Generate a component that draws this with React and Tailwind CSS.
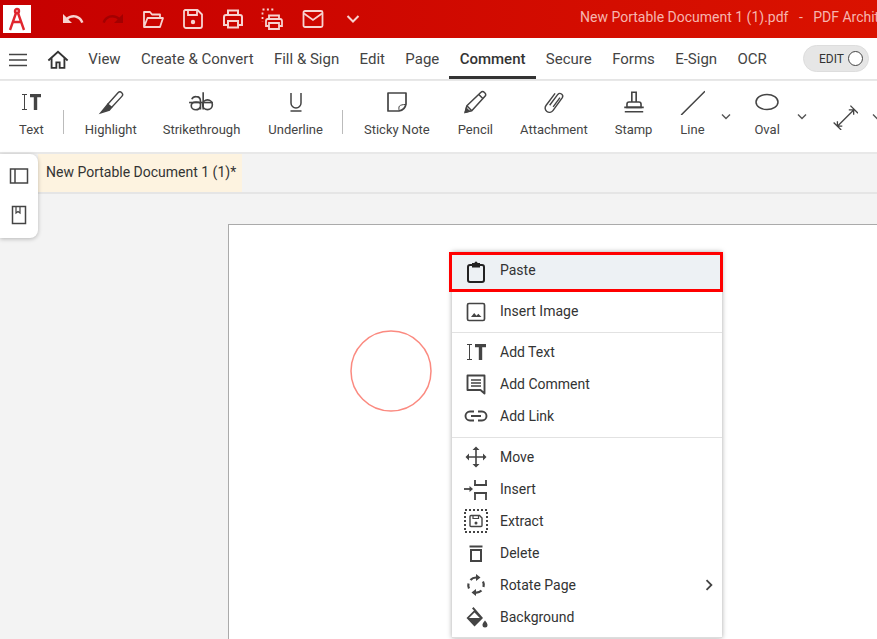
import React from 'react';
import { MdUndo, MdRedo, MdChevronRight } from 'react-icons/md';

const Ic = ({ size = 24, className = '', children, sw = 1.8 }) => (
  <svg width={size} height={size} viewBox="0 0 24 24" fill="none" stroke="currentColor" strokeWidth={sw} className={className}>
    {children}
  </svg>
);

const Chevron = ({ className = '' }) => (
  <svg width="12" height="8" viewBox="0 0 12 8" fill="none" stroke="currentColor" strokeWidth="1.4" className={className}>
    <path d="M2 1.5 6 5.5 10 1.5" />
  </svg>
);

const TextIcon = ({ size = 24 }) => (
  <Ic size={size} sw={1}>
    <path d="M3 4.5h5M3 19.5h5M5.5 4.5v15" />
    <path d="M11 4h11v3.2h-3.8V20h-3.4V7.2H11z" fill="currentColor" stroke="none" />
  </Ic>
);

const topIcons = [
  <MdUndo key="u" size={24} className="text-[#f7d3d0]" />,
  <MdRedo key="r" size={24} className="text-[#a30000]" />,
  <Ic key="o"><path d="M3 20V5h6l2 2.5h8V11M3 20h16l3-9H6.5z" strokeLinejoin="round" /></Ic>,
  <Ic key="s">
    <path d="M4 3h12.5L21 7.5V19a2 2 0 0 1-2 2H5a2 2 0 0 1-2-2V4z" strokeLinejoin="round" />
    <path d="M7 3.5V8h9V3.5" />
    <circle cx="12" cy="15" r="2.2" fill="currentColor" stroke="none" />
  </Ic>,
  <Ic key="p" sw={2}>
    <path d="M7 8V3.5h10V8M7 18H3v-8a2 2 0 0 1 2-2h14a2 2 0 0 1 2 2v8h-4" />
    <path d="M7 14h10v6.5H7z" />
  </Ic>,
  <Ic key="d">
    <path d="M1.5 2.5h12" strokeDasharray="2 2.4" />
    <path d="M1.5 5.5v9" strokeDasharray="2 2.4" />
    <path d="M8 12V8.5h10V12M8 19H5v-5a2 2 0 0 1 2-2h12a2 2 0 0 1 2 2v5h-3" />
    <path d="M8 16h10v6H8z" />
  </Ic>,
  <Ic key="m"><rect x="2.5" y="4" width="19" height="16" rx="1.5" /><path d="M3 6.5 12 13l9-6.5" /></Ic>,
  <svg key="c" width="24" height="24" viewBox="0 0 24 24" fill="none" stroke="currentColor" strokeWidth="2"><path d="M6.5 9 12 14.5 17.5 9" /></svg>,
];

const tabs = ['View', 'Create & Convert', 'Fill & Sign', 'Edit', 'Page', 'Comment', 'Secure', 'Forms', 'E-Sign', 'OCR'];

const Tool = ({ label, icon, className = '' }) => (
  <div className={`flex flex-col items-center px-[14px] shrink-0 ${className}`}>
    <div className="h-[28px] flex items-center justify-center">{icon}</div>
    <span className="mt-[6px] text-[13px] leading-[16px] text-[#444] whitespace-nowrap">{label}</span>
  </div>
);

const Sep = () => <div className="w-px h-[24px] bg-[#bbb] ml-[5px] mr-[7px] mt-[4px] self-center shrink-0" />;

const ToolChevron = ({ className = '' }) => (
  <div className={`w-[18px] flex justify-center pt-[25px] shrink-0 text-[#555] ${className}`}>
    <Chevron />
  </div>
);

const MenuRow = ({ icon, label, arrow }) => (
  <div className="h-8 flex items-center gap-3 pl-3 pr-2 text-[14px] text-[#333]">
    <div className="w-6 h-6 flex items-center justify-center text-[#444]">{icon}</div>
    <span className="flex-1">{label}</span>
    {arrow && <MdChevronRight size={22} className="text-[#444] -mr-[6px]" />}
  </div>
);

export default function App() {
  return (
    <div className="relative w-screen h-screen overflow-hidden bg-[#f3f3f3] font-['Roboto',sans-serif]">
      {/* title bar */}
      <div className="h-[38px] flex items-center bg-gradient-to-r from-[#c60000] to-[#da1200] text-[#f7d3d0]">
        <div className="ml-[3px] w-[28px] h-[28px] bg-white flex items-center justify-center text-[#e0262e]">
          <svg width="18" height="24" viewBox="0 0 18 24" fill="none" stroke="currentColor" strokeWidth="2.4">
            <circle cx="9" cy="4" r="2" />
            <path d="M8 6 2 23M10 6l6 17M5 15h8" />
          </svg>
        </div>
        <div className="ml-[30px] flex items-center gap-4">{topIcons}</div>
        <div className="ml-auto w-[297px] pb-[3px] text-[14px] whitespace-nowrap overflow-hidden text-[#f6b5ae]">
          New Portable Document 1 (1).pdf &nbsp;&nbsp;-&nbsp;&nbsp; PDF Archit
        </div>
      </div>

      {/* menu tabs */}
      <div className="h-[42px] flex items-stretch bg-white border-b border-[#e5e5e5]">
        <svg width="20" height="14" viewBox="0 0 20 14" fill="none" stroke="#444" strokeWidth="1.6" className="ml-[8px] mt-[2px] self-center">
          <path d="M1 1.5h18M1 7h18M1 12.5h18" />
        </svg>
        <div className="ml-[19px] mt-[2px] self-center text-[#333]">
          <Ic size={22} sw={2}>
            <path d="M1.5 12.5 12 3l10.5 9.5" />
            <path d="M5 10v10.5h5.2V14.5h3.6v6H19V10" />
          </Ic>
        </div>
        <div className="ml-[9px] flex items-stretch">
          {tabs.map((t) => (
            <div
              key={t}
              className={`px-[10.2px] flex items-center text-[15px] whitespace-nowrap border-b-[3px] border-t-[5px] border-t-transparent ${
                t === 'Comment' ? 'font-medium text-[#333] border-b-[#333]' : 'text-[#444] border-b-transparent'
              }`}
            >
              {t}
            </div>
          ))}
        </div>
        <div className="ml-[26px] self-center w-[66px] h-[27px] rounded-full bg-[#e6e6e6] border border-[#ddd] flex items-center justify-end gap-[4px] pr-[5px]">
          <span className="text-[12px] text-[#333]">EDIT</span>
          <span className="w-[15px] h-[15px] rounded-full bg-white border border-[#444]" />
        </div>
      </div>

      {/* comment toolbar */}
      <div className="h-[74px] flex items-start pl-[5px] pt-[7px] bg-white border-t border-b-2 border-[#e8e8e8] text-[#444] overflow-hidden">
        <Tool label="Text" icon={<TextIcon />} />
        <Sep />
        <Tool
          label="Highlight"
          icon={
            <Ic size={26} sw={1.3}>
              <path d="M9 14 18.500 3.500a2.400 2.400 0 0 1 3.500 3.300L12.500 17z" />
              <path d="M9 14l3.500 3-2 2.500L2.500 22z" fill="currentColor" />
            </Ic>
          }
        />
        <Tool
          label="Strikethrough"
          className="-ml-[2px]"
          icon={
            <Ic size={26} sw={1.5}>
              <path d="M3.500 9.500a4.200 4.200 0 0 1 4-2.500c2.500 0 4 1.500 4 4v8" />
              <path d="M11.500 13c-1-.8-2.500-1-4-1-2.500 0-4.500 1.200-4.500 3.500S5 19.200 7.300 19.200c2 0 3.500-1 4.200-2.700" />
              <path d="M14 3v16" />
              <circle cx="18" cy="14.500" r="4.500" />
              <path d="M1 12.500h22" />
            </Ic>
          }
        />
        <Tool
          label="Underline"
          icon={
            <Ic size={24} sw={1.5}>
              <path d="M7 3v10a5 5 0 0 0 10 0V3M6.500 21h11" />
            </Ic>
          }
        />
        <Sep />
        <Tool
          label="Sticky Note"
          icon={
            <Ic size={24} sw={1.7}>
              <path d="M3 3h18v11q-1 6-7 7H3z" strokeLinejoin="round" />
              <path d="M20.500 14.500c-2.500 0-5 .5-6 1.500s-.5 3-.500 4.500" strokeWidth="1" />
            </Ic>
          }
        />
        <Tool
          label="Pencil"
          icon={
            <Ic size={26} sw={1.4}>
              <path d="M3 21.500l1.500-6L17.500 3a2 2 0 0 1 3 0l.7.7a2 2 0 0 1 0 3L9 20z" strokeLinejoin="round" />
              <path d="M15.500 5l3.500 3.500M4.500 15.500 9 20" />
              <path d="M3 21.500l1-3.600 2.600 2.600z" fill="currentColor" />
            </Ic>
          }
        />
        <Tool
          label="Attachment"
          className="-ml-[1px]"
          icon={
            <Ic size={26} sw={1.3}>
              <path d="M8 15l7.500-10a2.600 2.600 0 0 1 4.200 3L11 20a4 4 0 0 1-6.400-4.800L13 4" />
              <path d="M11.200 16.500 17.500 8" />
            </Ic>
          }
        />
        <Tool
          label="Stamp"
          className="-ml-[1px]"
          icon={
            <Ic size={26} sw={1.5}>
              <path d="M10 3h4v9h-4zM10 12H7.500a2 2 0 0 0-2 2v3h13v-3a2 2 0 0 0-2-2H14" />
              <path d="M3 17h18M3.500 21h17" />
            </Ic>
          }
        />
        <Tool
          label="Line"
          className="-ml-[1px]"
          icon={
            <Ic size={26} sw={1.4}>
              <path d="M2 24 24 2" />
            </Ic>
          }
        />
        <ToolChevron className="-ml-[2px] mr-[5px]" />
        <Tool
          label="Oval"
          icon={
            <Ic size={24} sw={1.5}>
              <ellipse cx="12" cy="12" rx="11" ry="7.500" />
            </Ic>
          }
        />
        <ToolChevron className="-ml-[1px] mr-[8px]" />
        <div className="pt-[16px] pl-[13px] shrink-0">
          <Ic size={26} sw={1.2}>
            <path d="M5 20.500 20 5.500M5 20.500h4.500M5 20.500V16M20 5.500h-4.500M20 5.500V10M1.500 17l7 7M17 1.500l7 7" />
          </Ic>
        </div>
        <ToolChevron className="ml-[10px]" />
      </div>

      {/* document tab strip */}
      <div className="h-[40px] flex border-b-2 border-[#e5e5e5]">
        <div className="ml-[38px] w-[204px] bg-[#fdf3e0] pl-[8px] pb-[2px] flex items-center text-[14px] text-[#333]">
          New Portable Document 1 (1)*
        </div>
      </div>

      {/* page area */}
      <div className="pl-[228px] pt-[30px] h-full">
        <div className="h-full bg-white border-l border-t border-[#aaa]" />
      </div>

      {/* circle annotation */}
      <svg width="84" height="84" viewBox="0 0 84 84" fill="none" className="absolute left-[349px] top-[329px]">
        <circle cx="42" cy="42" r="40" stroke="#fb8a80" strokeWidth="1.5" />
      </svg>

      {/* floating side panel */}
      <div className="absolute left-0 top-[154px] w-[38px] h-[84px] bg-white rounded-r-[8px] shadow-[0_1px_4px_rgba(0,0,0,0.25)] flex flex-col items-center pt-[10px] gap-[16px] text-[#444]">
        <Ic size={24} sw={1.5} className="-ml-[1px]">
          <path d="M3.500 5h17v14h-17zM8 5v14" />
        </Ic>
        <Ic size={24} sw={1.5} className="-mt-[1px]">
          <path d="M5.500 3.500h13v17h-13z" />
          <path d="M9 4v6l2-1.500L13 10V4" strokeWidth="1.2" />
        </Ic>
      </div>

      {/* context menu */}
      <div className="absolute left-[452px] top-[252px] w-[270px] h-[386px] bg-white border-b border-[#ddd] shadow-[0_0_5px_rgba(0,0,0,0.35)]">
        <div className="h-[40px] -ml-[3px] -mr-[1px] border-[3px] border-[#ff0000] bg-[#edf1f4] flex items-center gap-3 pl-3 pb-[2px] text-[14px] text-[#333]">
          <div className="w-6 h-6 flex items-center justify-center text-[#222]">
            <Ic size={24} sw={2}>
              <path d="M8 6H6a2 2 0 0 0-2 2v13a2 2 0 0 0 2 2h12a2 2 0 0 0 2-2V8a2 2 0 0 0-2-2h-2" />
              <path d="M8 8.500V4h2.500a1.500 1.500 0 0 1 3 0H16v4.500z" fill="currentColor" stroke="none" />
            </Ic>
          </div>
          <span className="mb-[2px]">Paste</span>
        </div>
        <div className="h-[40px] pb-[1px] flex flex-col justify-center">
          <MenuRow
            label="Insert Image"
            icon={
              <Ic sw={1.7}>
                <rect x="3.500" y="3.500" width="17" height="17" rx="1.500" />
                <path d="M7 17l3.200-4 2.300 2.700 1.800-2L17.500 17z" fill="currentColor" stroke="none" />
              </Ic>
            }
          />
        </div>
        <div className="h-px bg-[#e2e2e2]" />
        <div className="pt-[3px] pb-[5px]">
          <MenuRow label="Add Text" icon={<TextIcon />} />
          <MenuRow
            label="Add Comment"
            icon={
              <Ic sw={1.9}>
                <path d="M3.500 3.500h17v18l-4-3.500h-13z" strokeLinejoin="round" />
                <path d="M7 8h10M7 11h10M7 14h10" strokeWidth="1.500" />
              </Ic>
            }
          />
          <MenuRow
            label="Add Link"
            icon={
              <Ic sw={1.9}>
                <path d="M10 7.500H6a4.500 4.500 0 0 0 0 9h4M14 7.500h4a4.500 4.500 0 0 1 0 9h-4M7 12h10" />
              </Ic>
            }
          />
        </div>
        <div className="h-px bg-[#e2e2e2]" />
        <div className="pt-[3px]">
          <MenuRow
            label="Move"
            icon={
              <svg width="24" height="24" viewBox="0 0 24 24" fill="currentColor">
                <path d="M12 1.500 15.500 5h-2.700v6.200H19V8.500l3.500 3.500-3.500 3.500v-2.700h-6.200V19h2.700L12 22.500 8.500 19h2.700v-6.200H5v2.700L1.500 12 5 8.500v2.700h6.200V5H8.500z" />
              </svg>
            }
          />
          <MenuRow
            label="Insert"
            icon={
              <Ic sw={1.8}>
                <path d="M11 3v5M22 3v5M10 8h13M10 16h13M11 16v7M22 16v7" />
                <path d="M0 12h6" />
                <path d="M5.500 9l3.500 3-3.500 3z" fill="currentColor" stroke="none" />
              </Ic>
            }
          />
          <MenuRow
            label="Extract"
            icon={
              <Ic sw={2}>
                <rect x="1" y="1" width="22" height="22" strokeDasharray="2 2" />
                <path d="M7 6.500h8.500L18 9v7.500a1 1 0 0 1-1 1H7a1 1 0 0 1-1-1v-9a1 1 0 0 1 1-1z" strokeWidth="1.400" />
                <path d="M9 7v2.500h5.500V7" strokeWidth="1.200" />
                <circle cx="12" cy="14" r="1.500" fill="currentColor" stroke="none" />
              </Ic>
            }
          />
          <MenuRow
            label="Delete"
            icon={
              <Ic sw={2}>
                <path d="M5.500 5.500h13" />
                <path d="M7 9h10v11H7z" />
              </Ic>
            }
          />
          <MenuRow
            label="Rotate Page"
            arrow
            icon={
              <Ic sw={2.2}>
                <path d="M5 15.500a7.500 7.500 0 0 1-.5-5M6.500 7a7.500 7.500 0 0 1 6-2.500M19 8.500a7.500 7.500 0 0 1 .5 5.500M17.500 17.500a7.500 7.500 0 0 1-6 2" />
                <path d="M12 1l4.500 3.500L12 8z" fill="currentColor" stroke="none" />
                <path d="M12 23l-4.500-3.500L12 16z" fill="currentColor" stroke="none" />
              </Ic>
            }
          />
          <MenuRow
            label="Background"
            icon={
              <svg width="24" height="24" viewBox="0 0 24 24" fill="currentColor">
                <path d="M9.500 2 8 3.500l2 2L2.500 13l8 8.500 8.500-8.500z" />
                <path d="M10.500 7.500 15.800 13H5z" fill="#fff" />
                <path d="M21 15.500s-2.500 2.800-2.500 4.500a2.500 2.500 0 0 0 5 0c0-1.700-2.500-4.500-2.500-4.500z" />
              </svg>
            }
          />
        </div>
      </div>
    </div>
  );
}
